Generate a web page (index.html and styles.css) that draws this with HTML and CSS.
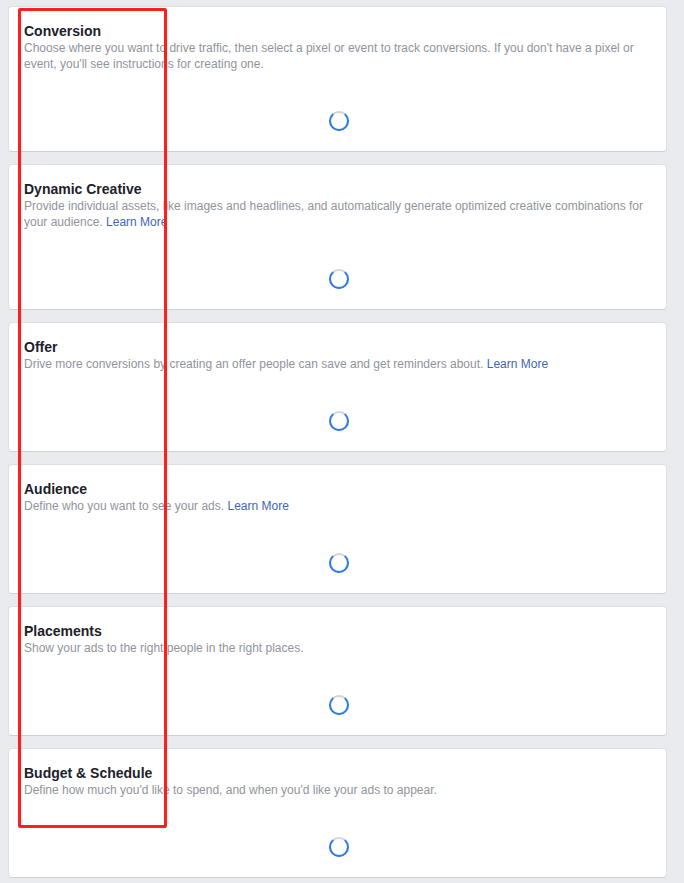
FILE: index.html
```html
<!DOCTYPE html>
<html>
<head>
<meta charset="utf-8">
<link rel="stylesheet" href="styles.css">
</head>
<body>
<div class="list">
  <section class="card">
    <h2 class="title">Conversion</h2>
    <p class="desc">Choose where you want to drive traffic, then select a pixel or event to track conversions. If you don't have a pixel or event, you'll see instructions for creating one.</p>
    <div class="spin"><svg width="20" height="20" viewBox="0 0 20 20"><circle cx="10" cy="10" r="9" class="track"/><path d="M16.36 3.64 A9 9 0 1 1 3.64 3.64" class="arc"/></svg></div>
  </section>
  <section class="card">
    <h2 class="title">Dynamic Creative</h2>
    <p class="desc">Provide individual assets, like images and headlines, and automatically generate optimized creative combinations for your audience. <a class="link">Learn More</a></p>
    <div class="spin"><svg width="20" height="20" viewBox="0 0 20 20"><circle cx="10" cy="10" r="9" class="track"/><path d="M16.36 3.64 A9 9 0 1 1 3.64 3.64" class="arc"/></svg></div>
  </section>
  <section class="card">
    <h2 class="title">Offer</h2>
    <p class="desc">Drive more conversions by creating an offer people can save and get reminders about. <a class="link">Learn More</a></p>
    <div class="spin"><svg width="20" height="20" viewBox="0 0 20 20"><circle cx="10" cy="10" r="9" class="track"/><path d="M16.36 3.64 A9 9 0 1 1 3.64 3.64" class="arc"/></svg></div>
  </section>
  <section class="card">
    <h2 class="title">Audience</h2>
    <p class="desc">Define who you want to see your ads. <a class="link">Learn More</a></p>
    <div class="spin"><svg width="20" height="20" viewBox="0 0 20 20"><circle cx="10" cy="10" r="9" class="track"/><path d="M16.36 3.64 A9 9 0 1 1 3.64 3.64" class="arc"/></svg></div>
  </section>
  <section class="card">
    <h2 class="title">Placements</h2>
    <p class="desc">Show your ads to the right people in the right places.</p>
    <div class="spin"><svg width="20" height="20" viewBox="0 0 20 20"><circle cx="10" cy="10" r="9" class="track"/><path d="M16.36 3.64 A9 9 0 1 1 3.64 3.64" class="arc"/></svg></div>
  </section>
  <section class="card">
    <h2 class="title">Budget &amp; Schedule</h2>
    <p class="desc">Define how much you'd like to spend, and when you'd like your ads to appear.</p>
    <div class="spin"><svg width="20" height="20" viewBox="0 0 20 20"><circle cx="10" cy="10" r="9" class="track"/><path d="M16.36 3.64 A9 9 0 1 1 3.64 3.64" class="arc"/></svg></div>
  </section>
</div>
<div class="highlight"></div>
</body>
</html>
```
FILE: styles.css
```css
html, body {
  margin: 0;
  background: #e9ebee;
}
body {
  position: relative;
  height: 883px;
  overflow: hidden;
  font-family: "Liberation Sans", Arial, sans-serif;
}
.list {
  display: flex;
  flex-direction: column;
  gap: 12px;
  padding: 6px 17px 0 8px;
}
.card {
  background: #fff;
  border: 1px solid #dddfe2;
  border-bottom-color: #cfd1d5;
  border-radius: 4px;
  padding: 15px 12px 0 15px;
  box-sizing: border-box;
}
.title {
  margin: 0;
  font-size: 14px;
  line-height: 18px;
  font-weight: bold;
  color: #1d2129;
}
.desc {
  margin: 0;
  font-size: 12px;
  line-height: 16px;
  color: #90949c;
}
.link {
  color: #4267b2;
  text-decoration: none;
}
.spin {
  display: flex;
  justify-content: center;
  margin-top: 39px;
  padding-bottom: 20px;
  height: 20px;
}
.spin svg {
  display: block;
}
.track {
  fill: none;
  stroke: #d3d5d9;
  stroke-width: 2;
}
.arc {
  fill: none;
  stroke: #2d7bea;
  stroke-width: 2;
  stroke-linecap: round;
}
.highlight {
  position: absolute;
  left: 18px;
  top: 8px;
  width: 149px;
  height: 820px;
  box-sizing: border-box;
  border: 3px solid #ff1e1e;
  border-radius: 2px;
}
```
